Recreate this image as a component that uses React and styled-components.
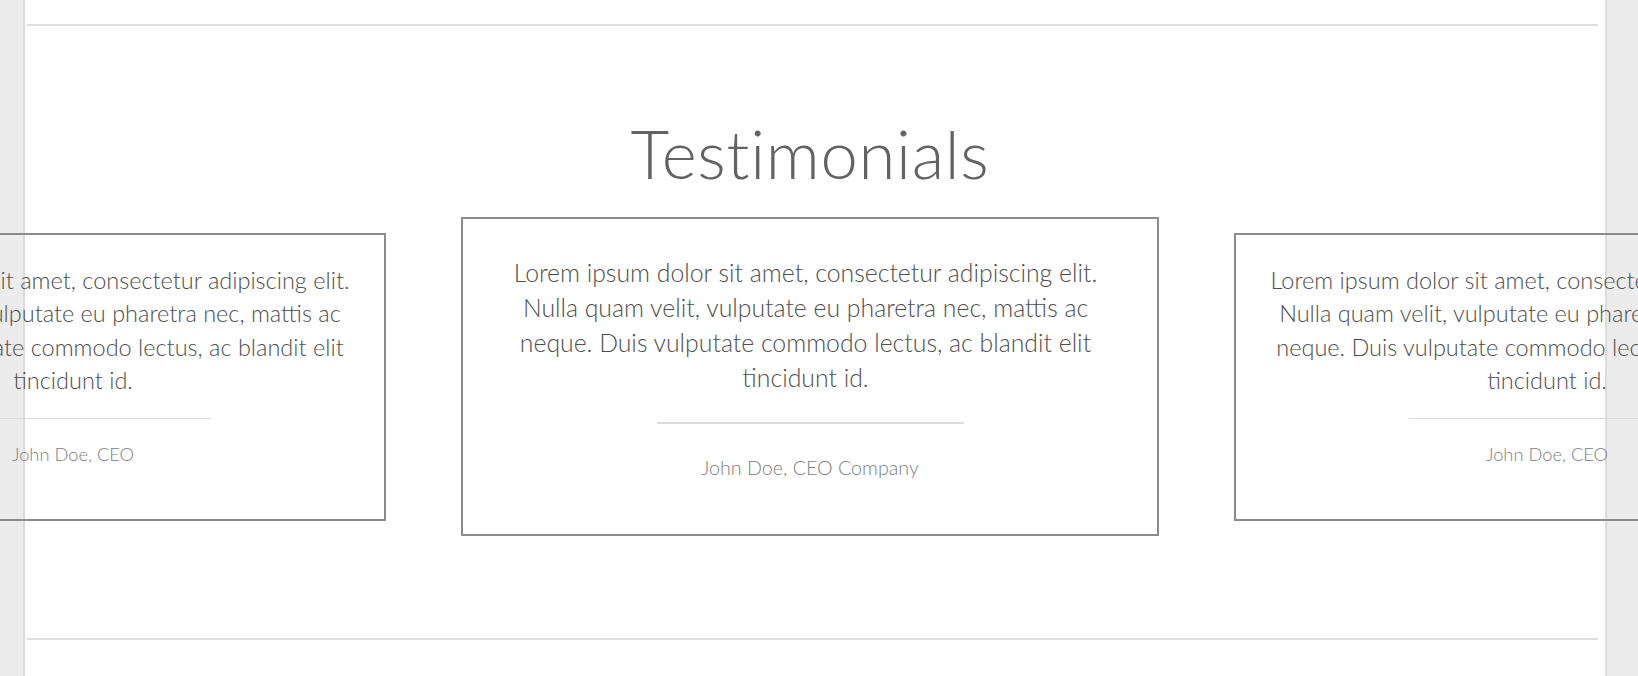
import React from "react";
import styled, { createGlobalStyle } from "styled-components";

const Global = createGlobalStyle`
  html, body {
    margin: 0;
    padding: 0;
    background: #ececec;
    overflow: hidden;
  }
  * { box-sizing: border-box; }
`;

const Page = styled.div`
  margin-left: 23px;
  width: 1584px;
  min-height: 676px;
  background: #fff;
  border-left: 2px solid #dcdcdc;
  border-right: 2px solid #dcdcdc;
  padding-top: 24px;
  font-family: Lato, "Open Sans", sans-serif;
`;

const Rule = styled.div`
  height: 2px;
  background: #dedede;
  margin: 0 7px 0 2px;
`;

const Section = styled.section`
  margin: 0 12px 0 2px;
  padding: 88px 0 0;
  height: 612px;
`;

const Title = styled.h2`
  margin: 0;
  height: 83px;
  line-height: 78px;
  text-align: center;
  font-size: 67px;
  font-weight: 300;
  color: #636363;
  letter-spacing: 0.7px;
`;

const Track = styled.div`
  margin-top: 20px;
  display: flex;
  justify-content: center;
  align-items: center;
  gap: 75px;
`;

const Card = styled.div`
  flex: 0 0 ${(p) => (p.$active ? 698 : 626)}px;
  height: ${(p) => (p.$active ? 319 : 288)}px;
  border: 2px solid #8c8c8c;
  padding-top: ${(p) => (p.$active ? 36 : 29)}px;
  display: flex;
  flex-direction: column;
  align-items: center;
  text-align: center;
`;

const Quote = styled.p`
  margin: 0 ${(p) => (p.$active ? 9 : 0)}px 0 0;
  font-size: ${(p) => (p.$active ? 24.8 : 23.5)}px;
  line-height: ${(p) => (p.$active ? 35 : 33.6)}px;
  color: #4e4e4e;
  font-weight: 300;
  white-space: nowrap;
`;

const Divider = styled.div`
  width: ${(p) => (p.$active ? 307 : 276)}px;
  height: ${(p) => (p.$active ? 2 : 1)}px;
  background: #dcdcdc;
  margin-top: ${(p) => (p.$active ? 27 : 20)}px;
`;

const Author = styled.div`
  margin-top: ${(p) => (p.$active ? 31 : 23)}px;
  font-size: ${(p) => (p.$active ? 19.7 : 18.3)}px;
  line-height: ${(p) => (p.$active ? 26 : 24)}px;
  color: #808080;
  font-weight: 300;
`;

const lines = [
  "Lorem ipsum dolor sit amet, consectetur adipiscing elit.",
  "Nulla quam velit, vulputate eu pharetra nec, mattis ac",
  "neque. Duis vulputate commodo lectus, ac blandit elit",
  "tincidunt id.",
];

function Testimonial({ active, author }) {
  return (
    <Card $active={active}>
      <Quote $active={active}>
        {lines.map((l, i) => (
          <React.Fragment key={i}>
            {l}
            {i < lines.length - 1 && <br />}
          </React.Fragment>
        ))}
      </Quote>
      <Divider $active={active} />
      <Author $active={active}>{author}</Author>
    </Card>
  );
}

export default function App() {
  return (
    <>
      <Global />
      <Page>
        <Rule />
        <Section>
          <Title>Testimonials</Title>
          <Track>
            <Testimonial author="John Doe, CEO" />
            <Testimonial active author="John Doe, CEO Company" />
            <Testimonial author="John Doe, CEO" />
          </Track>
        </Section>
        <Rule />
      </Page>
    </>
  );
}
